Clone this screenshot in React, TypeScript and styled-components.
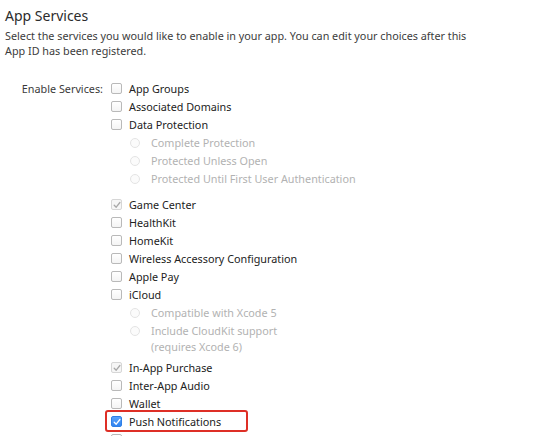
import React from "react";
import styled, { createGlobalStyle } from "styled-components";

const Global = createGlobalStyle`
  html, body { margin: 0; padding: 0; background: #ffffff; }
  body { font-family: "Noto Sans", "Open Sans", "DejaVu Sans", sans-serif; color: #333; overflow: hidden; }
`;

const Page = styled.div`
  padding: 4px 0 0 5px;
  width: 539px;
  height: 436px;
  overflow: hidden;
  box-sizing: border-box;
`;

const Title = styled.h2`
  margin: 0;
  font-size: 14px;
  font-weight: 400;
  line-height: 24px;
  color: #2b2b2b;
`;

const Description = styled.p`
  margin: 0;
  font-size: 10.8px;
  line-height: 15px;
  color: #3c3c3c;
  width: 470px;
`;

const Form = styled.div`
  display: flex;
  margin-top: 22px;
`;

const FieldLabel = styled.div`
  width: 98px;
  flex: none;
  text-align: right;
  font-size: 10.8px;
  line-height: 18px;
  color: #3a3a3a;
  margin-right: 8px;
`;

const Options = styled.div`
  display: flex;
  flex-direction: column;
`;

const Row = styled.div<{ $gapAfter?: number }>`
  display: flex;
  align-items: flex-start;
  min-height: 18px;
  margin-bottom: ${(p) => p.$gapAfter ?? 0}px;
`;

const Label = styled.span<{ $disabled?: boolean }>`
  font-size: 10.8px;
  line-height: 18px;
  color: ${(p) => (p.$disabled ? "#b2b2b2" : "#222")};
`;

const WrapLabel = styled(Label)`
  line-height: 16px;
  padding-top: 1px;
`;

const Box = styled.span<{ $checked?: boolean; $disabled?: boolean }>`
  flex: none;
  width: 11px;
  height: 11px;
  box-sizing: border-box;
  margin: 3px 7px 0 0;
  border-radius: 2px;
  border: 1px solid
    ${(p) => (p.$checked && !p.$disabled ? "#2f7fe6" : p.$disabled ? "#d6d6d6" : "#b9b9b9")};
  background: ${(p) =>
    p.$checked && !p.$disabled
      ? "linear-gradient(#5aa3fa, #2f83f0)"
      : p.$disabled
      ? "#f6f6f6"
      : "linear-gradient(#ffffff, #f4f4f4)"};
  display: flex;
  align-items: center;
  justify-content: center;
`;

const Radio = styled.span`
  flex: none;
  width: 10px;
  height: 10px;
  box-sizing: border-box;
  border-radius: 50%;
  border: 1px solid #e4e4e4;
  background: #fbfbfb;
  margin: 4px 11px 0 19px;
`;

const Highlight = styled.div`
  position: relative;
  &::after {
    content: "";
    position: absolute;
    left: -6px;
    top: -3px;
    width: 143px;
    height: 22px;
    box-sizing: border-box;
    border: 2px solid #de2f26;
    border-radius: 3px;
    pointer-events: none;
  }
`;

const Check = ({ color }: { color: string }) => (
  <svg width="8" height="8" viewBox="0 0 8 8">
    <path d="M1.2 4.2 L3.2 6.2 L6.9 1.5" fill="none" stroke={color} strokeWidth="1.3" strokeLinecap="round" strokeLinejoin="round" />
  </svg>
);

type CbProps = { label: string; checked?: boolean; disabled?: boolean; gap?: number };

const CheckRow = ({ label, checked, disabled, gap }: CbProps) => (
  <Row $gapAfter={gap}>
    <Box $checked={checked} $disabled={disabled}>
      {checked && <Check color={disabled ? "#a8a8a8" : "#ffffff"} />}
    </Box>
    <Label>{label}</Label>
  </Row>
);

const RadioRow = ({ label, gap }: { label: React.ReactNode; gap?: number }) => (
  <Row $gapAfter={gap}>
    <Radio />
    <WrapLabel $disabled>{label}</WrapLabel>
  </Row>
);

export default function App() {
  return (
    <>
      <Global />
      <Page>
        <Title>App Services</Title>
        <Description>
          Select the services you would like to enable in your app. You can edit your choices after this App ID has
          been registered.
        </Description>
        <Form>
          <FieldLabel>Enable Services:</FieldLabel>
          <Options>
            <CheckRow label="App Groups" />
            <CheckRow label="Associated Domains" />
            <CheckRow label="Data Protection" />
            <RadioRow label="Complete Protection" />
            <RadioRow label="Protected Unless Open" />
            <RadioRow label="Protected Until First User Authentication" gap={8} />
            <CheckRow label="Game Center" checked disabled />
            <CheckRow label="HealthKit" />
            <CheckRow label="HomeKit" />
            <CheckRow label="Wireless Accessory Configuration" />
            <CheckRow label="Apple Pay" />
            <CheckRow label="iCloud" />
            <RadioRow label="Compatible with Xcode 5" />
            <RadioRow
              label={
                <>
                  Include CloudKit support
                  <br />
                  (requires Xcode 6)
                </>
              }
              gap={4}
            />
            <CheckRow label="In-App Purchase" checked disabled />
            <CheckRow label="Inter-App Audio" />
            <CheckRow label="Wallet" />
            <Highlight>
              <CheckRow label="Push Notifications" checked />
            </Highlight>
            <CheckRow label="Personal VPN Configuration" />
          </Options>
        </Form>
      </Page>
    </>
  );
}
